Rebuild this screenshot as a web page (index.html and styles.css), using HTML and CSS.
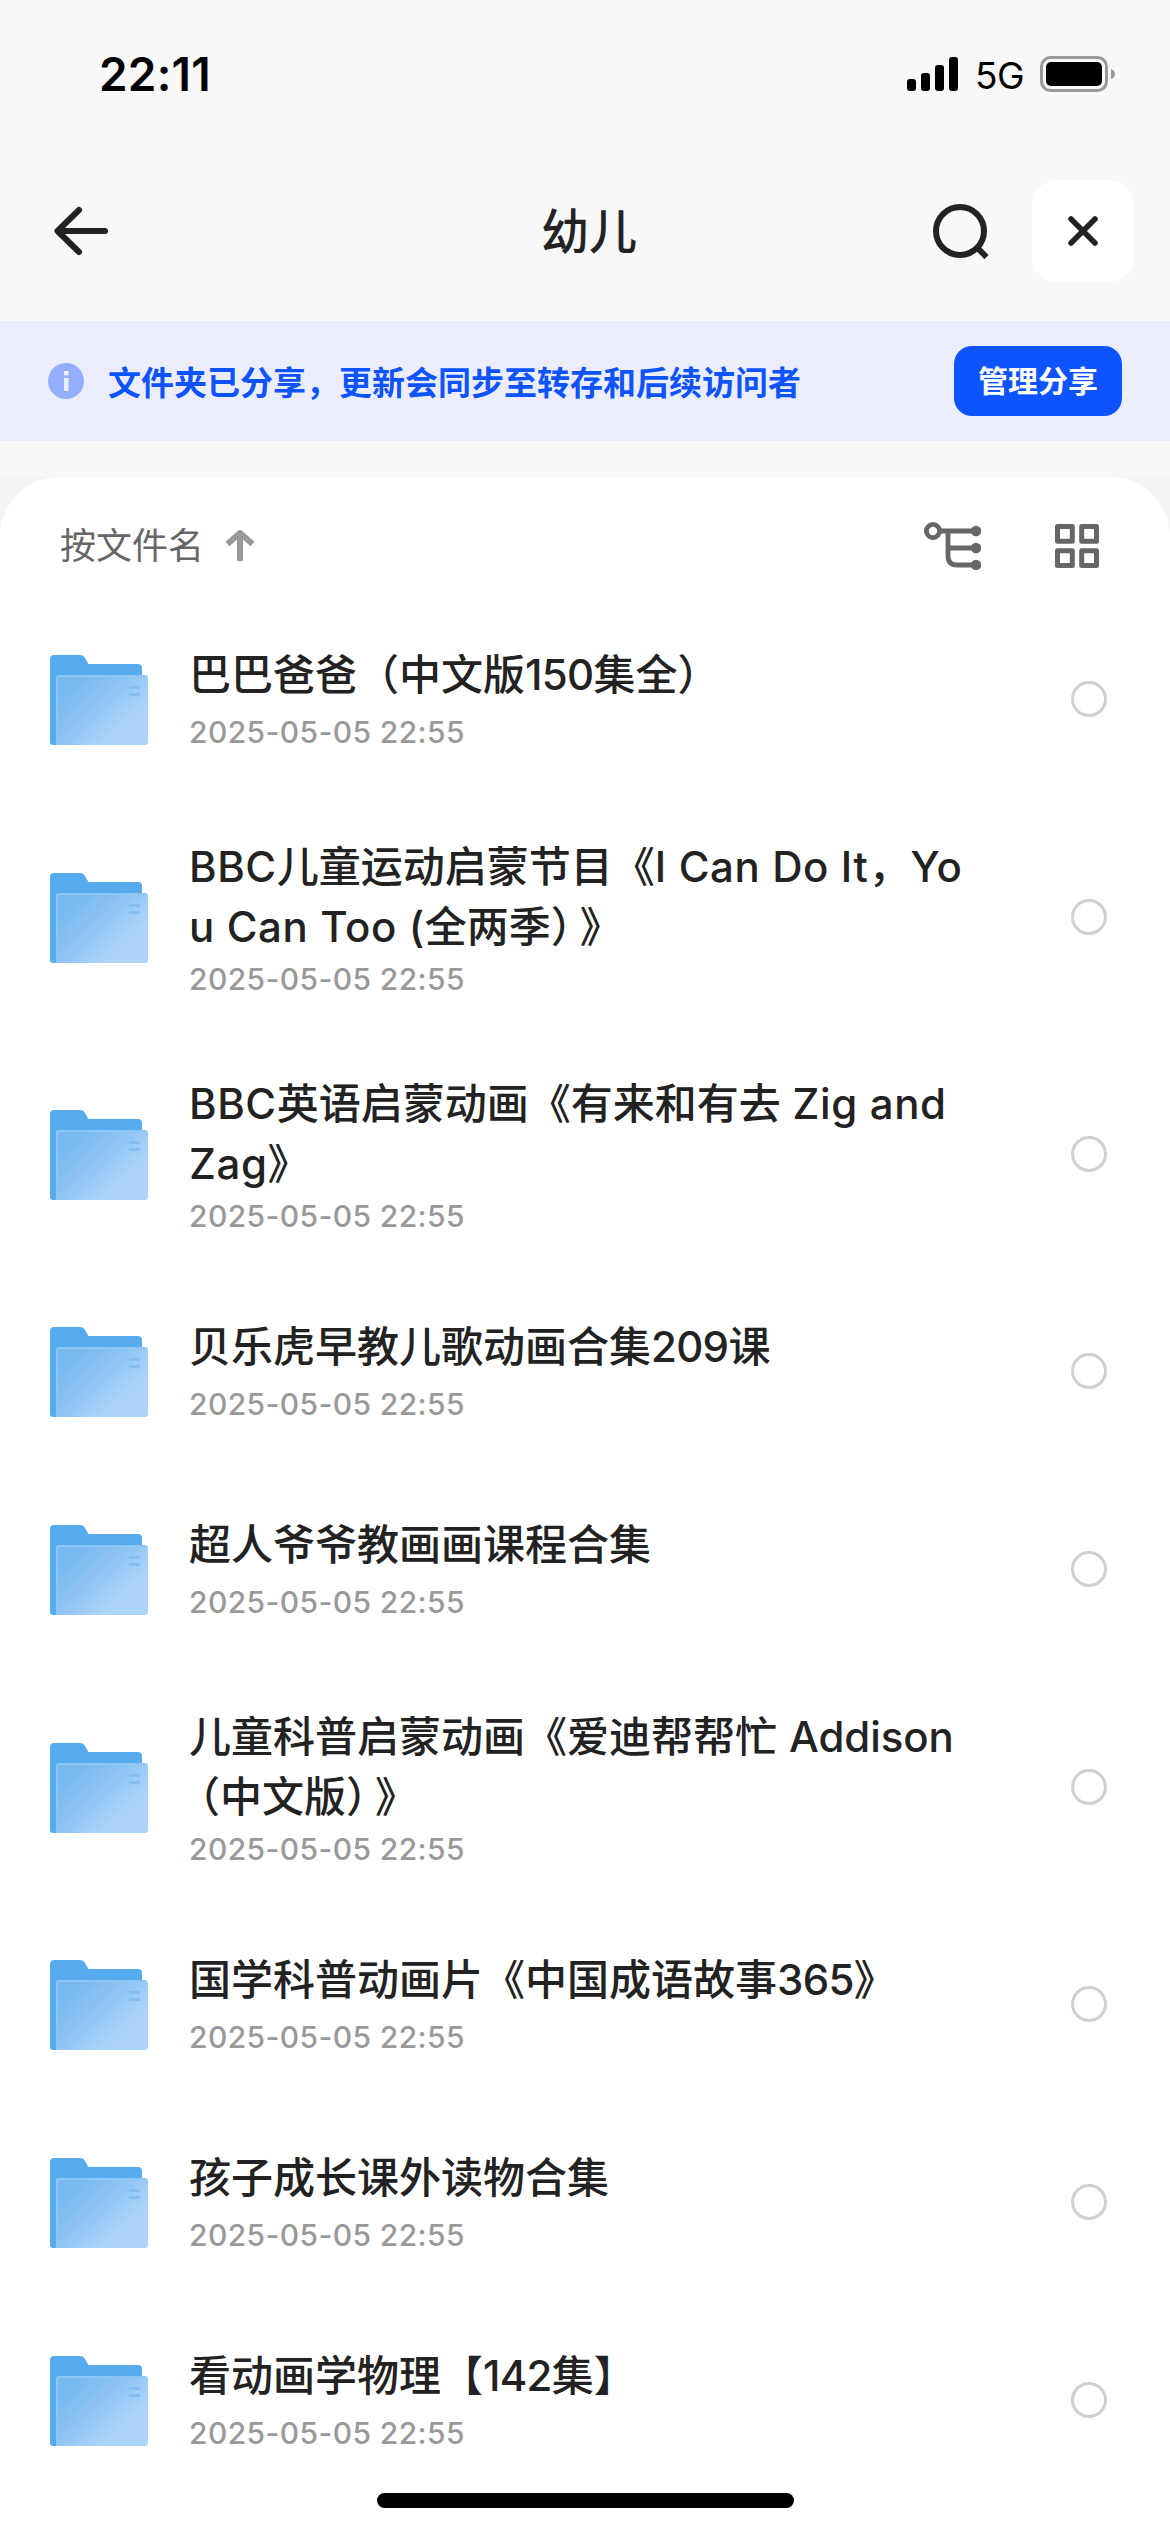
FILE: index.html
```html
<!DOCTYPE html>
<html lang="zh-CN">
<head>
<meta charset="utf-8">
<title>幼儿</title>
<link rel="stylesheet" href="styles.css">
</head>
<body>
<svg class="defs" width="0" height="0" aria-hidden="true">
  <defs>
    <linearGradient id="front" x1="0" y1="0.1" x2="1" y2="0.9">
      <stop offset="0.15" stop-color="#78b9ef"/>
      <stop offset="0.5" stop-color="#95c7f5"/>
      <stop offset="0.75" stop-color="#acd4f9"/>
      <stop offset="1" stop-color="#add4f9"/>
    </linearGradient>
    <symbol id="folder" viewBox="0 0 98 90">
      <path d="M0 4a4 4 0 0 1 4-4h26q3 0 4.500 2.200L38.500 9H88a4 4 0 0 1 4 4v20H6v57H3a3 3 0 0 1-3-3z" fill="#56abee"/>
      <path d="M6 23a3 3 0 0 1 3-3h86a3 3 0 0 1 3 3v64a3 3 0 0 1-3 3H6z" fill="url(#front)"/>
      <path d="M7 90V23a2 2 0 0 1 2-2h86" fill="none" stroke="#8cc6f5" stroke-width="2"/>
      <path d="M79 32.500h11M79 39.500h11" stroke="#85bef3" stroke-width="3"/>
    </symbol>
  </defs>
</svg>
<div class="screen">
  <header class="status">
    <span class="time">22:11</span>
    <div class="indicators">
      <svg class="signal" width="51" height="34" viewBox="0 0 51 34"><rect y="22" width="9" height="12" rx="3"/><rect x="14" y="16" width="9" height="18" rx="3"/><rect x="28" y="8" width="9" height="26" rx="3"/><rect x="42" width="9" height="34" rx="3"/></svg>
      <span class="network">5G</span>
      <svg class="battery" width="75" height="36" viewBox="0 0 75 36"><rect x="1.500" y="1.500" width="65" height="33" rx="9" fill="none" stroke="#999" stroke-width="3"/><rect x="6" y="6" width="56" height="24" rx="5"/><path d="M71 13q4 1.500 4 5t-4 5z" fill="#999"/></svg>
    </div>
  </header>
  <nav class="nav">
    <svg class="back" width="54" height="50" viewBox="0 0 54 50" fill="none" stroke="#222" stroke-width="6" stroke-linecap="round" stroke-linejoin="round"><path d="M51 25H4M25 4L3.500 25 25 46"/></svg>
    <h1 class="title">幼儿</h1>
    <svg class="search" width="56" height="56" viewBox="0 0 56 56" fill="none" stroke="#222" stroke-width="6"><circle cx="27" cy="28" r="24"/><path d="M44 44.500l9.500 9.500"/></svg>
    <button class="close"><svg width="32" height="32" viewBox="0 0 32 32" stroke="#222" stroke-width="5.500" stroke-linecap="round"><path d="M4 4l24 24M28 4L4 28"/></svg></button>
  </nav>
  <section class="banner">
    <svg class="info" width="36" height="36" viewBox="0 0 36 36"><circle cx="18" cy="18" r="18" fill="#93affc"/><path d="M16 8h4.500v4.500H16zM16 15h4.500v13H16z" fill="#ebeefa"/></svg>
    <p class="notice">文件夹已分享，更新会同步至转存和后续访问者</p>
    <button class="manage">管理分享</button>
  </section>
  <div class="sheet">
  <main class="card">
    <div class="toolbar">
      <span class="sort">按文件名</span>
      <svg class="asc" width="30" height="32" viewBox="0 0 30 32" fill="none" stroke="#999" stroke-width="6" stroke-linejoin="round"><path d="M15 31V4M2.500 14L15 3l12.500 11"/></svg>
      <svg class="tree" width="57" height="48" viewBox="0 0 57 48" fill="none" stroke="#666" stroke-width="4.800"><circle cx="9" cy="9" r="6.600"/><path d="M16 9h36M24 9v25q0 9 9 9h19M24 26h28"/><g fill="#666" stroke="none"><circle cx="52" cy="9" r="5.200"/><circle cx="52" cy="26" r="5.200"/><circle cx="52" cy="43" r="5.200"/></g></svg>
      <svg class="grid" width="44" height="44" viewBox="0 0 44 44" fill="none" stroke="#666" stroke-width="5" stroke-linejoin="round"><path d="M2.500 2.500h14.800v14.800H2.500zM26.700 2.500h14.800v14.800H26.700zM2.500 26.700h14.800v14.800H2.500zM26.700 26.700h14.800v14.800H26.700z"/></svg>
    </div>
    <ul class="list">
      <li class="row"><svg class="folder"><use href="#folder"/></svg><div class="text"><h2>巴巴爸爸（中文版<span class="num">150</span>集全）</h2><time>2025-05-05 22:55</time></div><i class="radio"></i></li>
      <li class="row tall"><svg class="folder"><use href="#folder"/></svg><div class="text"><h2><span class="en">BBC</span>儿童运动启蒙节目《<span class="en">I Can Do It</span>，<span class="en">Yo</span><br><span class="en">u Can Too (</span>全两季<span class="snug">）</span>》</h2><time>2025-05-05 22:55</time></div><i class="radio"></i></li>
      <li class="row tall"><svg class="folder"><use href="#folder"/></svg><div class="text"><h2><span class="en">BBC</span>英语启蒙动画《有来和有去<span class="en"> Zig and</span><br><span class="en">Zag</span>》</h2><time>2025-05-05 22:55</time></div><i class="radio"></i></li>
      <li class="row"><svg class="folder"><use href="#folder"/></svg><div class="text"><h2>贝乐虎早教儿歌动画合集<span class="num">209</span>课</h2><time>2025-05-05 22:55</time></div><i class="radio"></i></li>
      <li class="row"><svg class="folder"><use href="#folder"/></svg><div class="text"><h2>超人爷爷教画画课程合集</h2><time>2025-05-05 22:55</time></div><i class="radio"></i></li>
      <li class="row tall"><svg class="folder"><use href="#folder"/></svg><div class="text"><h2>儿童科普启蒙动画《爱迪帮帮忙<span class="en name"> Addison</span><br><span class="lead">（</span>中文版<span class="snug">）</span>》</h2><time>2025-05-05 22:55</time></div><i class="radio"></i></li>
      <li class="row"><svg class="folder"><use href="#folder"/></svg><div class="text"><h2>国学科普动画片《中国成语故事<span class="num">365</span>》</h2><time>2025-05-05 22:55</time></div><i class="radio"></i></li>
      <li class="row"><svg class="folder"><use href="#folder"/></svg><div class="text"><h2>孩子成长课外读物合集</h2><time>2025-05-05 22:55</time></div><i class="radio"></i></li>
      <li class="row"><svg class="folder"><use href="#folder"/></svg><div class="text"><h2>看动画学物理【<span class="num">142</span>集】</h2><time>2025-05-05 22:55</time></div><i class="radio"></i></li>
    </ul>
  </main>
  </div>
  <div class="home"></div>
</div>
</body>
</html>
```
FILE: styles.css
```css
* { box-sizing: border-box; margin: 0; padding: 0; }

body {
  background: #f8f8f8;
  font-family: Inter, "Noto Sans CJK SC", sans-serif;
  color: #222;
  text-spacing-trim: space-all;
}

svg { display: block; flex: none; }
.defs { position: absolute; }
button { border: 0; font-family: inherit; }

.screen {
  position: relative;
  display: flex;
  flex-direction: column;
  width: 1170px;
  height: 2532px;
  overflow: hidden;
}

.status {
  display: flex;
  justify-content: space-between;
  align-items: center;
  height: 148px;
  padding: 0 55px 0 99px;
  color: #000;
}
.time { font-size: 46px; font-weight: 600; line-height: 60px; letter-spacing: 0.2px; }
.indicators { display: flex; align-items: center; }
.network { width: 82px; padding-left: 17px; font-size: 37px; font-weight: 400; line-height: 50px; letter-spacing: -0.5px; padding-top: 3px; }

.nav {
  display: flex;
  align-items: center;
  height: 173px;
  padding: 0 36px 7px 54px;
}
.nav .title {
  flex: 1;
  padding: 2px 0 0 433px;
  font-size: 48px;
  font-weight: 500;
  line-height: 60px;
}
.search { margin-right: 43px; }
.close {
  display: grid;
  place-items: center;
  width: 102px;
  height: 102px;
  border-radius: 25px;
  background: #fff;
}

.banner {
  display: flex;
  align-items: center;
  height: 120px;
  padding: 0 48px;
  background: #ebeefa;
}
.notice {
  flex: 1;
  padding: 3px 0 0 24px;
  font-size: 33px;
  font-weight: 600;
  line-height: 48px;
  color: #0d53ff;
}
.manage {
  width: 168px;
  height: 70px;
  border-radius: 18px;
  background: #0d53ff;
  color: #fff;
  font-size: 30px;
  font-weight: 700;
  line-height: 70px;
}

.sheet { flex: 1; margin-top: 36px; background: #f4f5f7; }
.card { height: 100%; border-radius: 60px 60px 0 0; background: #fff; }

.toolbar {
  display: flex;
  align-items: center;
  height: 123px;
  padding: 15px 71px 0 60px;
}
.sort { font-size: 36px; font-weight: 400; line-height: 52px; color: #666; }
.asc { margin-left: 21px; }
.tree { margin-left: auto; }
.grid { margin-left: 74px; }

.list { list-style: none; }
.row {
  display: flex;
  align-items: center;
  height: 198px;
  padding: 0 63px 0 50px;
}
.row.tall { height: 237px; }
.folder { width: 98px; height: 90px; margin-top: 2px; }
.text { flex: 1; margin-left: 41px; }
.text h2 {
  font-size: 42px;
  font-weight: 500;
  line-height: 60px;
  white-space: nowrap;
}
.text time {
  display: block;
  margin-top: 7px;
  font-size: 30px;
  font-weight: 500;
  line-height: 41px;
  letter-spacing: 0.4px;
  color: #999;
}
.row.tall .text { padding-top: 4px; }
.row.tall time { margin-top: 2px; }
.en { letter-spacing: 0.6px; }
.en.name { letter-spacing: -0.1px; word-spacing: 1px; }
.num { letter-spacing: -0.7px; }
.snug { letter-spacing: -13px; }
.lead { margin-left: -11px; }
.radio {
  width: 36px;
  height: 36px;
  border: 3px solid #cfcfd6;
  border-radius: 50%;
}

.home {
  position: absolute;
  left: 377px;
  bottom: 24px;
  width: 417px;
  height: 15px;
  border-radius: 8px;
  background: #000;
}
```
